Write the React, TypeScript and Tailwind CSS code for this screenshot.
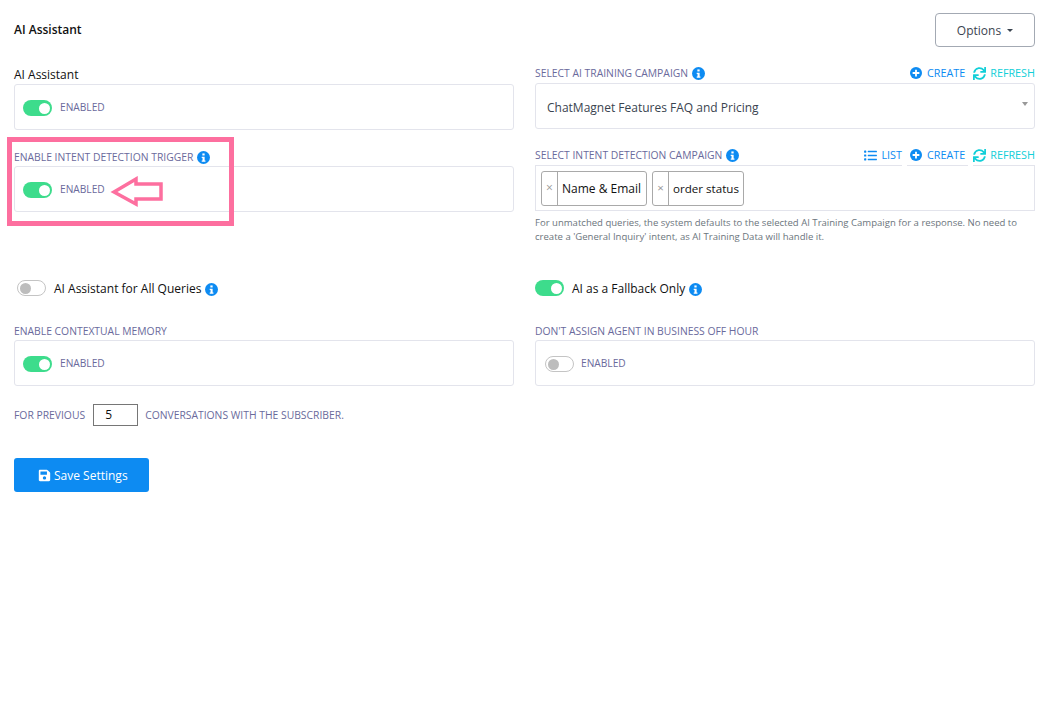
import React from "react";

const font = "font-['Open_Sans','Noto_Sans',sans-serif]";

function Info({ className = "" }: { className?: string }) {
  return (
    <svg viewBox="0 0 16 16" className={`w-[13px] h-[13px] shrink-0 ${className}`}>
      <circle cx="8" cy="8" r="8" fill="#0d8bf2" />
      <rect x="6.6" y="3" width="2.8" height="2.5" fill="#fff" />
      <path d="M5.8 7h3.6v4.6h1v1.5H5.8v-1.5h1V8.5h-1z" fill="#fff" />
    </svg>
  );
}

function PlusCircle() {
  return (
    <svg viewBox="0 0 16 16" className="w-3 h-3 shrink-0">
      <circle cx="8" cy="8" r="8" fill="#0d8bf2" />
      <path d="M6.8 3.5h2.4v3.3h3.3v2.4H9.2v3.3H6.8V9.2H3.5V6.8h3.3z" fill="#fff" />
    </svg>
  );
}

function Sync() {
  return (
    <svg viewBox="0 0 512 512" className="w-[13px] h-[13px] shrink-0" fill="#12cfd8">
      <path d="M440.65 12.57l4 82.77A247.16 247.16 0 0 0 255.83 8C134.73 8 33.91 94.92 12.29 209.82A12 12 0 0 0 24.09 224h49.05a12 12 0 0 0 11.67-9.26 175.91 175.91 0 0 1 317-56.94l-101.46-4.86a12 12 0 0 0-12.57 12v47.41a12 12 0 0 0 12 12H500a12 12 0 0 0 12-12V12a12 12 0 0 0-12-12h-47.37a12 12 0 0 0-11.98 12.57zM255.83 432a175.61 175.61 0 0 1-146-77.8l101.8 4.87a12 12 0 0 0 12.57-12v-47.4a12 12 0 0 0-12-12H12a12 12 0 0 0-12 12V500a12 12 0 0 0 12 12h47.35a12 12 0 0 0 12-12.6l-4.15-82.57A247.17 247.17 0 0 0 255.83 504c121.11 0 221.93-86.92 243.55-201.82a12 12 0 0 0-11.8-14.18h-49.05a12 12 0 0 0-11.67 9.26A175.86 175.86 0 0 1 255.83 432z" />
    </svg>
  );
}

function ListIcon() {
  return (
    <svg viewBox="0 0 14 12" className="w-[13px] h-[11px] shrink-0" fill="#0d8bf2">
      <rect x="0" y="0.5" width="2.4" height="2.4" rx="0.5" />
      <rect x="0" y="4.8" width="2.4" height="2.4" rx="0.5" />
      <rect x="0" y="9.1" width="2.4" height="2.4" rx="0.5" />
      <rect x="4" y="0.9" width="10" height="1.6" rx="0.4" />
      <rect x="4" y="5.2" width="10" height="1.6" rx="0.4" />
      <rect x="4" y="9.5" width="10" height="1.6" rx="0.4" />
    </svg>
  );
}

function Toggle({ on }: { on: boolean }) {
  return on ? (
    <span className="flex items-center justify-end w-[29px] h-4 rounded-full bg-[#3ddc8c] pr-[2px] shrink-0">
      <span className="w-[11px] h-[11px] rounded-full bg-white" />
    </span>
  ) : (
    <span className="flex items-center w-[29px] h-4 rounded-full bg-white border border-[#c4c4c4] pl-[2px] shrink-0">
      <span className="w-[11px] h-[11px] rounded-full bg-[#bdbdbd]" />
    </span>
  );
}

function SwitchBox({ on, cls = "" }: { on: boolean; cls?: string }) {
  return (
    <div className={`h-[46px] border border-[#e3e4ec] rounded-[3px] flex items-center pt-[2px] ${cls}`}>
      <Toggle on={on} />
      <span className="text-[10.2px] text-[#6a6a9c]">ENABLED</span>
    </div>
  );
}

function Label({ children }: { children: React.ReactNode }) {
  return <span className="text-[10.35px] leading-[14px] text-[#6a6a9c] whitespace-nowrap">{children}</span>;
}

function Create() {
  return (
    <span className="flex items-center gap-[5px] text-[#0d8bf2]">
      <PlusCircle />
      CREATE
    </span>
  );
}

function Refresh() {
  return (
    <span className="flex items-center gap-[4px] text-[#12cfd8]">
      <Sync />
      REFRESH
    </span>
  );
}

export default function App() {
  return (
    <div className={`relative w-[1045px] h-[702px] bg-white overflow-hidden pl-[14px] pr-[10px] ${font}`}>
      <div className="flex items-center justify-between h-[47px] pt-[13px]">
        <span className="text-[12px] font-semibold text-[#111]">AI Assistant</span>
        <button className="flex items-center justify-center gap-[6px] w-[100px] h-[34px] border border-[#a3a9b3] rounded-[4px] text-[12px] text-[#3a4450] pt-[1px]">
          Options
          <span className="w-0 h-0 border-x-[3px] border-x-transparent border-t-[3px] border-t-[#3a4450]" />
        </button>
      </div>

      <div className="grid grid-cols-[500px_500px] gap-x-[21px] mt-[16px]">
        <div className="flex flex-col">
          <div className="h-[21px] flex items-center pt-[2px] text-[12px] text-[#111]">AI Assistant</div>
          <SwitchBox on cls="gap-[8px] pl-2" />
          <div className="h-[18px] mt-[18px] flex items-center gap-1">
            <Label>ENABLE INTENT DETECTION TRIGGER</Label>
            <Info />
          </div>
          <SwitchBox on cls="gap-[8px] pl-2" />
        </div>
        <div className="flex flex-col">
          <div className="h-[20px] flex items-center justify-between">
            <span className="flex items-center gap-1">
              <Label>SELECT AI TRAINING CAMPAIGN</Label>
              <Info />
            </span>
            <span className="flex items-center gap-[8px] text-[10.8px]">
              <Create />
              <Refresh />
            </span>
          </div>
          <div className="relative h-[46px] border border-[#e3e4ec] rounded-[3px] flex items-center pl-[11px] pt-[4px] text-[12px] text-[#3a4450]">
            ChatMagnet Features FAQ and Pricing
            <span className="absolute right-[6px] top-[18px] w-0 h-0 border-x-[3px] border-x-transparent border-t-[4px] border-t-[#999]" />
          </div>
          <div className="h-[18px] mt-[18px] pb-[2px] flex items-center justify-between">
            <span className="flex items-center gap-1">
              <Label>SELECT INTENT DETECTION CAMPAIGN</Label>
              <Info />
            </span>
            <span className="flex items-center gap-[8px] text-[10.8px]">
              <span className="flex items-center gap-[4px] text-[#0d8bf2]">
                <ListIcon />
                LIST
              </span>
              <Create />
              <Refresh />
            </span>
          </div>
          <div className="relative h-[46px] border border-[#e3e4ec] flex items-center gap-[5px] pl-[5px]">
            <span className="absolute -top-px left-[366px] w-[5px] h-px bg-white" />
            <span className="absolute -top-px left-[432px] w-[5px] h-px bg-white" />
            <span className="flex items-stretch w-[106px] h-[35px] border border-[#a9a9a9] rounded-[3px] text-[12px] text-[#111] whitespace-nowrap">
              <span className="w-[16px] border-r border-[#a9a9a9] flex items-center justify-center text-[#999]">×</span>
              <span className="flex items-center pl-[4px] pt-[1px]">Name &amp; Email</span>
            </span>
            <span className="flex items-stretch w-[92px] h-[35px] border border-[#a9a9a9] rounded-[3px] text-[11.6px] text-[#111] whitespace-nowrap">
              <span className="w-[16px] border-r border-[#a9a9a9] flex items-center justify-center text-[#999]">×</span>
              <span className="flex items-center pl-[4px] pt-[1px]">order status</span>
            </span>
          </div>
          <p className="mt-[5px] text-[9.55px] leading-[14px] text-[#6c757d] whitespace-nowrap">
            For unmatched queries, the system defaults to the selected AI Training Campaign for a response. No need to
            <br />
            create a 'General Inquiry' intent, as AI Training Data will handle it.
          </p>
        </div>
      </div>

      <div className="grid grid-cols-[500px_500px] gap-x-[21px] mt-[35px]">
        <div className="flex items-center gap-[8px] h-[20px] pl-[3px] text-[12px] text-[#111]">
          <span className="mb-[2px]">
            <Toggle on={false} />
          </span>
          <span className="flex items-center gap-[4px]">
            AI Assistant for All Queries
            <Info />
          </span>
        </div>
        <div className="flex items-center gap-[8px] h-[20px] text-[12px] text-[#111]">
          <span className="mb-[2px]">
            <Toggle on />
          </span>
          <span className="flex items-center gap-1">
            AI as a Fallback Only
            <Info />
          </span>
        </div>
      </div>

      <div className="grid grid-cols-[500px_500px] gap-x-[21px] mt-[25px]">
        <div className="flex flex-col">
          <div className="h-[16px] flex items-start">
            <Label>ENABLE CONTEXTUAL MEMORY</Label>
          </div>
          <SwitchBox on cls="gap-[8px] pl-2" />
        </div>
        <div className="flex flex-col">
          <div className="h-[16px] flex items-start">
            <Label>DON'T ASSIGN AGENT IN BUSINESS OFF HOUR</Label>
          </div>
          <SwitchBox on={false} cls="gap-[7px] pl-[9px]" />
        </div>
      </div>

      <div className="flex items-center h-[22px] mt-[18px]">
        <Label>FOR PREVIOUS</Label>
        <span className="ml-[8px] mr-[7px] w-[45px] h-[22px] border border-[#767676] flex items-center pl-[11px] text-[12px] text-[#111]">5</span>
        <Label>CONVERSATIONS WITH THE SUBSCRIBER.</Label>
      </div>

      <button className="mt-[32px] flex items-center gap-[3px] pl-[24px] pt-[1px] w-[135px] h-[34px] rounded-[3px] bg-[#0d8bf2] text-white text-[12px]">
        <svg viewBox="0 0 448 512" className="w-[13px] h-[13px]" fill="#fff">
          <path d="M433.94 129.94l-83.88-83.88A48 48 0 0 0 316.12 32H48C21.49 32 0 53.49 0 80v352c0 26.51 21.49 48 48 48h352c26.51 0 48-21.49 48-48V163.88a48 48 0 0 0-14.06-33.94zM224 416c-35.35 0-64-28.65-64-64s28.65-64 64-64 64 28.65 64 64-28.65 64-64 64zm96-304.52V212c0 6.63-5.37 12-12 12H76c-6.63 0-12-5.37-12-12V108c0-6.63 5.37-12 12-12h228.52c3.18 0 6.24 1.26 8.49 3.51l3.48 3.48A12 12 0 0 1 320 111.48z" />
        </svg>
        Save Settings
      </button>

      {/* Annotation overlay */}
      <div className="absolute left-[7px] top-[137px] w-[227px] h-[89px] border-[5px] border-[#fd6f9f] pointer-events-none" />
      <svg className="absolute left-[110px] top-[176px] pointer-events-none" width="56" height="32" viewBox="0 0 56 32">
        <path d="M4 16 L26 3 L26 8 L51 8 L51 23 L26 23 L26 28 Z" fill="#fff" stroke="#fd6f9f" strokeWidth="3.5" />
      </svg>
    </div>
  );
}
